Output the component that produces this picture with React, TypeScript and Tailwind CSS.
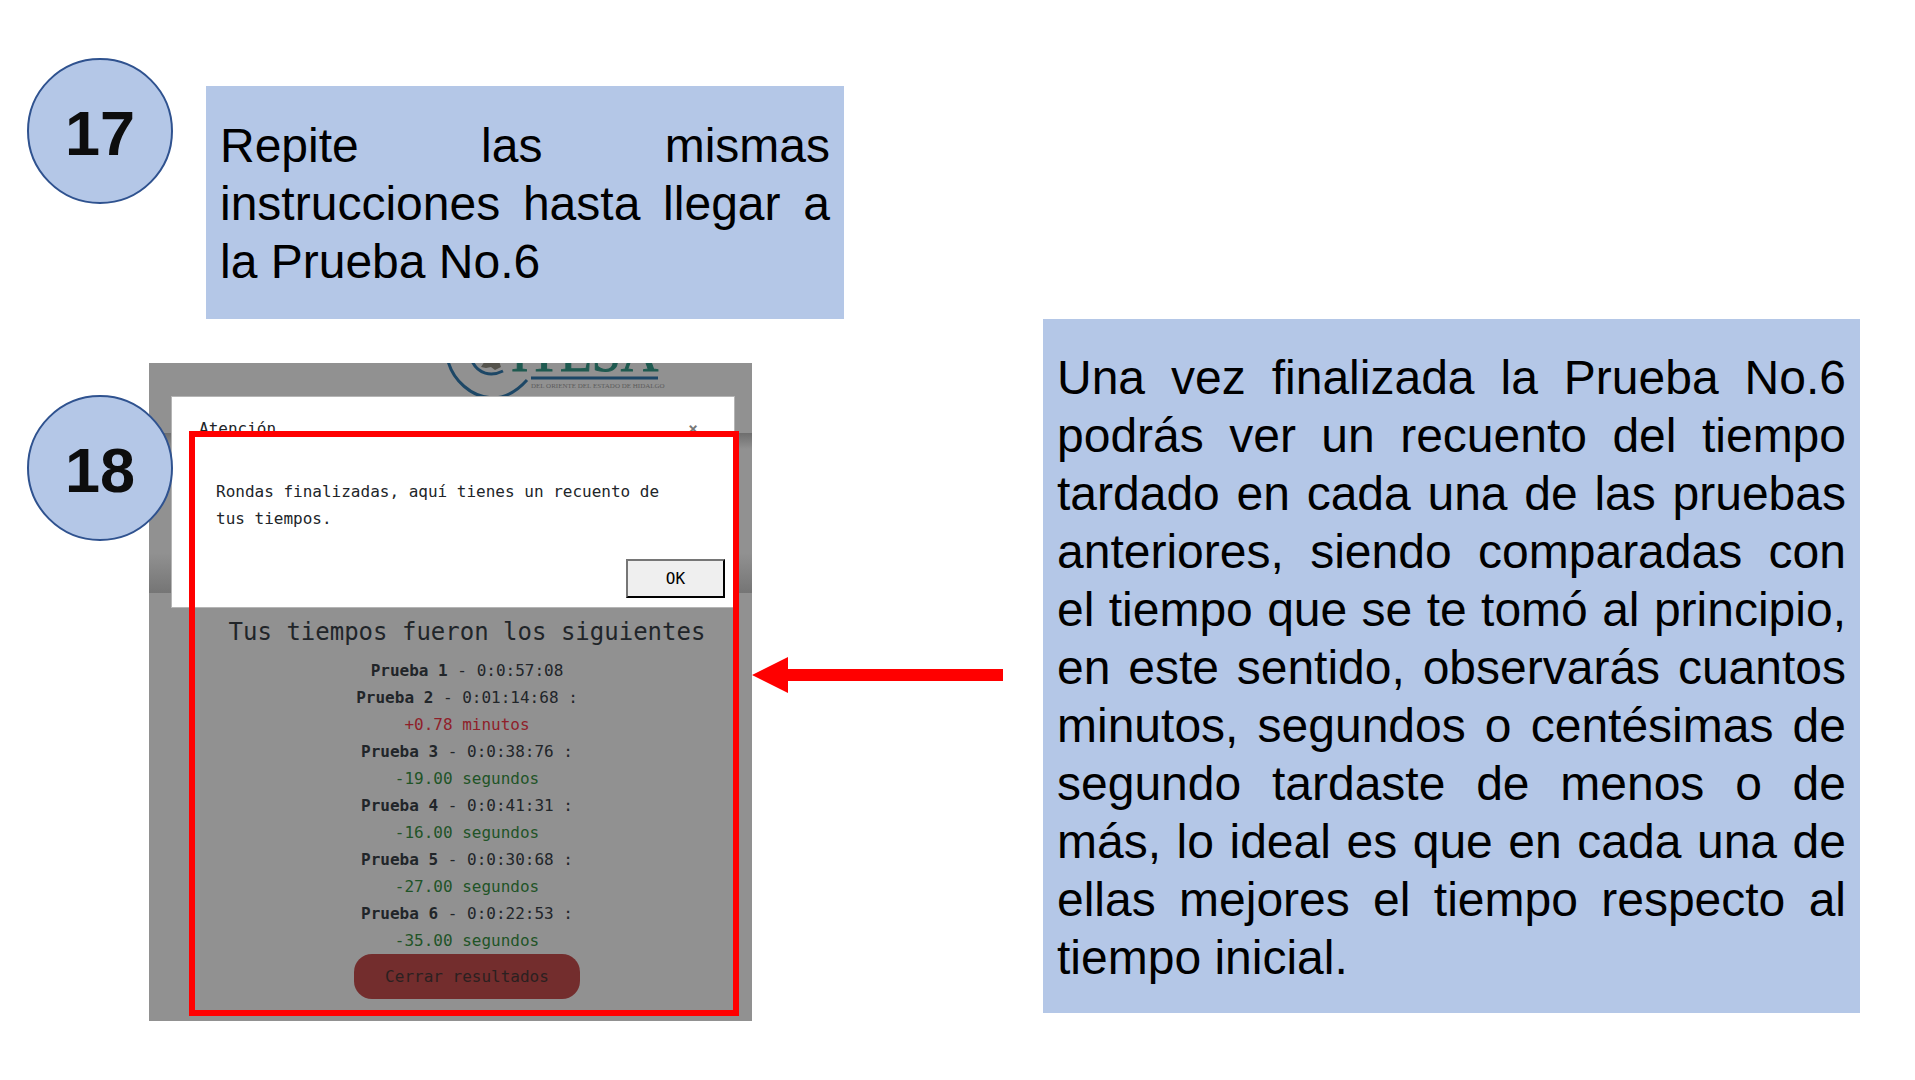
const rows = [
  { name: 'Prueba 1', time: '0:0:57:08' },
  { name: 'Prueba 2', time: '0:01:14:68 :', diff: '+0.78 minutos', slower: true },
  { name: 'Prueba 3', time: '0:0:38:76 :', diff: '-19.00 segundos' },
  { name: 'Prueba 4', time: '0:0:41:31 :', diff: '-16.00 segundos' },
  { name: 'Prueba 5', time: '0:0:30:68 :', diff: '-27.00 segundos' },
  { name: 'Prueba 6', time: '0:0:22:53 :', diff: '-35.00 segundos' },
];

function StepNumber({ value }: { value: number }) {
  return (
    <div className="flex size-[146px] shrink-0 items-center justify-center rounded-full border-2 border-[#2f528f] bg-[#b4c7e7] pt-1 text-[63px] leading-none font-bold text-[#0d0d0d]">
      {value}
    </div>
  );
}

function Logo() {
  return (
    <svg className="absolute top-0 left-[296px]" width="224" height="36" viewBox="0 0 224 36" fill="none" aria-label="ITESA" role="img">
      <path d="M3-2C8 17 26 34 47 35C62 35 74 26 82 17" stroke="#1d4766" strokeWidth="3" />
      <path d="M27-2C33 11 46 14 58 8" stroke="#1d4766" strokeWidth="3" />
      <path d="M36 4l4-6h14l2 6-6 3-4-3-5 1z" fill="#55534c" />
      <text x="66" y="8" fontFamily="Liberation Serif, serif" fontSize="52" fill="#1f5a50" stroke="#1f5a50">ITESA</text>
      <path d="M86 15H213" stroke="#1d4766" strokeWidth="3" />
      <text x="86" y="25" fontFamily="Liberation Serif, serif" fontSize="7" fill="#5c5c5c">DEL ORIENTE DEL ESTADO DE HIDALGO</text>
    </svg>
  );
}

function Dialog() {
  return (
    <section role="dialog" aria-label="Atención" className="relative mt-[34px] mr-[18px] ml-[23px] flex h-[210px] flex-col bg-white outline outline-[#b5b5b5]">
      <header className="flex items-center justify-between pt-[18px] pr-9 pl-[27px]">
        <h2>Atención</h2>
        <button type="button" aria-label="Cerrar" className="font-bold text-[#777]">×</button>
      </header>
      <p className="mt-9 pr-12 pl-11">Rondas finalizadas, aquí tienes un recuento de tus tiempos.</p>
      <button type="button" className="mt-auto mr-[9px] mb-[9px] h-[39px] w-[99px] self-end border-2 border-t-[#767676] border-r-black border-b-black border-l-[#767676] bg-[#efefef] text-black">
        OK
      </button>
    </section>
  );
}

function Results() {
  return (
    <section className="flex flex-col items-center pt-[9px] pl-[33px]">
      <h2 className="text-2xl leading-8">Tus tiempos fueron los siguientes</h2>
      <ul className="mt-[9px] text-center">
        {rows.map((row) => (
          <li key={row.name}>
            <strong>{row.name}</strong> - {row.time}
            {row.diff && <div className={row.slower ? 'text-[#8f1f2a]' : 'text-[#1f5427]'}>{row.diff}</div>}
          </li>
        ))}
      </ul>
      <button type="button" className="h-[45px] w-[226px] rounded-[18px] bg-[#732d2d] text-[#2b2020]">Cerrar resultados</button>
    </section>
  );
}

export default function App() {
  return (
    <main className="flex min-h-screen w-full bg-white font-['Liberation_Sans',Arial,sans-serif] text-black">
      <div className="flex w-[844px] shrink-0 flex-col pt-[58px] pl-[27px]">
        <div className="flex items-start gap-[33px]">
          <StepNumber value={17} />
          <p className="mt-7 grow bg-[#b4c7e7] px-[14px] pt-[31px] pb-7 text-justify text-5xl leading-[58px]">
            Repite las mismas instrucciones hasta llegar a la Prueba No.6
          </p>
        </div>
        <div className="mt-11 flex items-start">
          <div className="relative z-10 mt-8 -mr-6">
            <StepNumber value={18} />
          </div>
          <div className="relative h-[658px] w-[603px] overflow-hidden bg-[#919191] font-['DejaVu_Sans_Mono',monospace] text-base leading-[27px] text-[#212529]">
            <Logo />
            <div className="absolute top-[70px] h-[160px] w-full bg-linear-to-b from-[#6e6e6e] via-[#919191] via-10% to-[#919191]">
              <div className="h-full bg-linear-to-t from-[#757575] to-transparent to-25%" />
            </div>
            <Dialog />
            <Results />
            <div className="pointer-events-none absolute top-[68px] right-[13px] bottom-[5px] left-10 border-6 border-[#ff0000]" />
          </div>
        </div>
      </div>
      <div className="flex grow items-start pt-[319px] pr-[55px]">
        <svg className="mt-[338px] mr-10 -ml-[92px] shrink-0" width="251" height="36" viewBox="0 0 251 36" fill="#ff0000" aria-hidden="true">
          <path d="M0 18L36 0V12H251V24H36V36Z" />
        </svg>
        <p className="grow bg-[#b4c7e7] px-[14px] pt-[30px] pb-[26px] text-justify text-5xl leading-[58px]">
          Una vez finalizada la Prueba No.6 podrás ver un recuento del tiempo tardado en cada una de las pruebas anteriores, siendo comparadas con el tiempo que se te tomó al principio, en este sentido, observarás cuantos minutos, segundos o centésimas de segundo tardaste de menos o de más, lo ideal es que en cada una de ellas mejores el tiempo respecto al tiempo inicial.
        </p>
      </div>
    </main>
  );
}
